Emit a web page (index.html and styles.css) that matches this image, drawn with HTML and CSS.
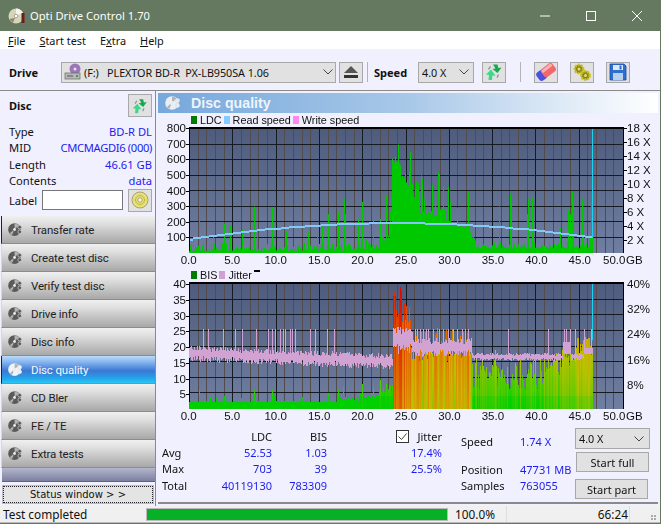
FILE: index.html
```html
<!DOCTYPE html>
<html lang="en">
<head>
<meta charset="utf-8">
<title>Opti Drive Control 1.70</title>
<link rel="stylesheet" href="styles.css">
</head>
<body>
<svg class="sprites" width="0" height="0" aria-hidden="true">
  <symbol id="nav-disc" viewBox="0 0 16 16">
    <circle cx="7" cy="8" r="6.800" fill="currentColor"/>
    <path d="M7 1.500a6.500 6.500 0 0 1 4.500 1.900L8.400 6.600A2 2 0 0 0 7 6zM2 12a6.500 6.500 0 0 0 2.300 1.900L6 10A2 2 0 0 1 5.200 9z" fill="#b4b4b4"/>
    <circle cx="7" cy="8" r="1.500" fill="#ececec"/>
    <circle cx="12.500" cy="5.500" r="2" fill="currentColor" stroke="#dcdcdc" stroke-width=".7"/>
    <circle cx="12.500" cy="10.500" r="2" fill="currentColor" stroke="#dcdcdc" stroke-width=".7"/>
  </symbol>
  <symbol id="swap" viewBox="0 0 20 20">
    <path d="M9 2.500h4.500l.8 3.500 3.200-.5L13.500 11 8.500 7l3-.5z" fill="#16a850"/>
    <path d="M7 7.500L2 12.500l3 .5-.5 5h3.500l.5-4.500 3 .2z" fill="#40d888"/>
    <path d="M4 7l2-3 1 .8-2 3zM15 13l-1.500 3-1-.7 1.500-3z" fill="#8c8c8c"/>
  </symbol>
</svg>
<div class="window">
  <header class="titlebar">
    <svg class="app-icon" width="18" height="18" viewBox="0 0 18 18"><circle cx="8" cy="9" r="7.500" fill="#d8d4b8"/><path d="M8 1.500A7.500 7.500 0 0 1 15 6L9.500 8.200A2 2 0 0 0 8 7z" fill="#f6f4e8"/><path d="M1.500 12A7.500 7.500 0 0 0 5 15.800L7 10.800z" fill="#8d8a70"/><circle cx="8" cy="9" r="1.800" fill="#fff" stroke="#777" stroke-width=".6"/><rect x="13.500" y="6" width="3" height="10" fill="#6a1e1e"/></svg>
    <span class="app-title">Opti Drive Control 1.70</span>
    <div class="win-controls">
      <svg width="46" height="30" viewBox="0 0 46 30"><path d="M18 15h10" stroke="#fff" fill="none"/></svg>
      <svg width="46" height="30" viewBox="0 0 46 30"><rect x="18.500" y="10.500" width="9" height="9" stroke="#fff" fill="none"/></svg>
      <svg width="46" height="30" viewBox="0 0 46 30"><path d="M18 10l10 10M28 10L18 20" stroke="#fff" fill="none"/></svg>
    </div>
  </header>
  <nav class="menubar">
    <span class="menu"><u>F</u>ile</span>
    <span class="menu"><u>S</u>tart test</span>
    <span class="menu">E<u>x</u>tra</span>
    <span class="menu"><u>H</u>elp</span>
  </nav>
  <div class="toolbar">
    <span class="tool-label drive-label">Drive</span>
    <div class="select drive-select">
      <svg width="18" height="18" viewBox="0 0 18 18"><circle cx="11" cy="6" r="5.500" fill="#9a78b8"/><circle cx="11" cy="6" r="1.500" fill="#e8e0f0"/><rect x="1" y="10" width="15" height="6" fill="#b8b8b8" stroke="#666" stroke-width=".7"/><rect x="3" y="12.500" width="6" height="1" fill="#555"/><rect x="12" y="12" width="2" height="2" fill="#20b030"/></svg>
      <span class="select-text">(F:)&nbsp;&nbsp; PLEXTOR BD-R&nbsp; PX-LB950SA 1.06</span>
      <svg class="chev" width="10" height="6" viewBox="0 0 10 6"><path d="M.5.500L5 5 9.500.500" stroke="#444" fill="none"/></svg>
    </div>
    <button class="tool-btn eject-btn" aria-label="Eject"><svg width="16" height="14" viewBox="0 0 16 14"><path d="M8 1l7 7H1z" fill="#555"/><rect x="1" y="10" width="14" height="3" fill="#333"/></svg></button>
    <span class="tool-sep sep-a"></span>
    <span class="tool-label speed-label">Speed</span>
    <div class="select speed-select">
      <span class="select-text">4.0 X</span>
      <svg class="chev" width="10" height="6" viewBox="0 0 10 6"><path d="M.5.500L5 5 9.500.500" stroke="#444" fill="none"/></svg>
    </div>
    <button class="tool-btn swap-btn" aria-label="Refresh"><svg width="20" height="20"><use href="#swap"/></svg></button>
    <span class="tool-sep sep-b"></span>
    <button class="tool-btn erase-btn" aria-label="Erase"><svg width="20" height="20" viewBox="0 0 20 20"><g transform="rotate(-38 10 10)"><rect x="0" y="5" width="9" height="10" rx="3" fill="#4a50e0"/><rect x="6" y="5" width="14" height="10" rx="2.500" fill="#f0686c"/><rect x="7" y="6" width="12" height="3" fill="#f8b0b0"/></g></svg></button>
    <button class="tool-btn gear-btn" aria-label="Settings"><svg width="20" height="20" viewBox="0 0 20 20"><circle cx="7" cy="7" r="4.200" fill="#8a8618" stroke="#c8c020" stroke-width="2.400" stroke-dasharray="2 1"/><circle cx="13.500" cy="13.500" r="4.200" fill="#8a8618" stroke="#c8c020" stroke-width="2.400" stroke-dasharray="2 1"/><circle cx="7" cy="7" r="1.500" fill="#e0dc80"/><circle cx="13.500" cy="13.500" r="1.500" fill="#e0dc80"/></svg></button>
    <button class="tool-btn save-btn" aria-label="Save"><svg width="18" height="18" viewBox="0 0 18 18"><path d="M1 1h14l2 2v14H1z" fill="#2f6fd0" stroke="#1c4c9c" stroke-width=".8"/><rect x="4" y="2" width="10" height="5" fill="#dfe8f6"/><rect x="10.500" y="2.500" width="2" height="4" fill="#2f6fd0"/><rect x="4" y="10" width="10" height="7" fill="#b8d0f0"/></svg></button>
  </div>
  <main class="content">
    <aside class="sidebar">
      <div class="disc-head">
        <span class="disc-title">Disc</span>
        <button class="tool-btn small-btn" aria-label="Refresh disc"><svg width="18" height="18"><use href="#swap"/></svg></button>
      </div>
      <dl class="disc-info">
        <div class="info-row"><dt>Type</dt><dd>BD-R DL</dd></div>
        <div class="info-row"><dt>MID</dt><dd>CMCMAGDI6 (000)</dd></div>
        <div class="info-row"><dt>Length</dt><dd>46.61 GB</dd></div>
        <div class="info-row"><dt>Contents</dt><dd>data</dd></div>
      </dl>
      <div class="label-row">
        <span>Label</span>
        <span class="label-input"></span>
        <button class="tool-btn small-btn" aria-label="Label"><svg width="18" height="18" viewBox="0 0 18 18"><circle cx="9" cy="9" r="8" fill="#e8e070" stroke="#777" stroke-width=".6"/><circle cx="9" cy="9" r="4.500" fill="none" stroke="#c0b840"/><circle cx="9" cy="9" r="2.200" fill="#f6f6e0" stroke="#777" stroke-width=".6"/></svg></button>
      </div>
      <ul class="nav">
        <li class="nav-item first"><svg width="15" height="15"><use href="#nav-disc"/></svg><span>Transfer rate</span></li>
        <li class="nav-item"><svg width="15" height="15"><use href="#nav-disc"/></svg><span>Create test disc</span></li>
        <li class="nav-item"><svg width="15" height="15"><use href="#nav-disc"/></svg><span>Verify test disc</span></li>
        <li class="nav-item"><svg width="15" height="15"><use href="#nav-disc"/></svg><span>Drive info</span></li>
        <li class="nav-item"><svg width="15" height="15"><use href="#nav-disc"/></svg><span>Disc info</span></li>
        <li class="nav-item active"><svg width="15" height="15"><use href="#nav-disc"/></svg><span>Disc quality</span></li>
        <li class="nav-item"><svg width="15" height="15"><use href="#nav-disc"/></svg><span>CD Bler</span></li>
        <li class="nav-item"><svg width="15" height="15"><use href="#nav-disc"/></svg><span>FE / TE</span></li>
        <li class="nav-item"><svg width="15" height="15"><use href="#nav-disc"/></svg><span>Extra tests</span></li>
      </ul>
      <div class="nav-fill"></div>
      <div class="status-btn"><span>Status window &gt; &gt;</span></div>
    </aside>
    <section class="panel">
      <div class="panel-head">
        <svg width="16" height="16" class="head-icon"><use href="#nav-disc"/></svg>
        <h1>Disc quality</h1>
      </div>
      <div class="legend legend-top">
        <i class="sw sw-ldc"></i><span>LDC</span>
        <i class="sw sw-read"></i><span>Read speed</span>
        <i class="sw sw-write"></i><span>Write speed</span>
      </div>
      <div class="chart chart-top">
        <div class="axis axis-left ticks axis-h-top">
          <span>800</span><span>700</span><span>600</span><span>500</span><span>400</span><span>300</span><span>200</span><span>100</span><span></span>
        </div>
        <canvas id="plot-ldc" class="plot" width="435" height="126"></canvas>
        <div class="axis axis-right ticks axis-h-top">
          <span>18 X</span><span>16 X</span><span>14 X</span><span>12 X</span><span>10 X</span><span>8 X</span><span>6 X</span><span>4 X</span><span>2 X</span><span></span>
        </div>
      </div>
      <div class="xaxis">
        <span>0.0</span><span>5.0</span><span>10.0</span><span>15.0</span><span>20.0</span><span>25.0</span><span>30.0</span><span>35.0</span><span>40.0</span><span>45.0</span><span class="x-last">50.0</span>
        <b>GB</b>
      </div>
      <div class="legend legend-bottom">
        <i class="sw sw-ldc"></i><span>BIS</span>
        <i class="sw sw-jit"></i><span>Jitter</span>
        <i class="legend-mark"></i>
      </div>
      <div class="chart chart-bottom">
        <div class="axis axis-left ticks axis-h-bottom">
          <span>40</span><span>35</span><span>30</span><span>25</span><span>20</span><span>15</span><span>10</span><span>5</span><span></span>
        </div>
        <canvas id="plot-bis" class="plot" width="435" height="127"></canvas>
        <div class="axis axis-right axis-h-bottom">
          <span>40%</span><span>32%</span><span>24%</span><span>16%</span><span>8%</span><span></span>
        </div>
      </div>
      <div class="xaxis">
        <span>0.0</span><span>5.0</span><span>10.0</span><span>15.0</span><span>20.0</span><span>25.0</span><span>30.0</span><span>35.0</span><span>40.0</span><span>45.0</span><span class="x-last">50.0</span>
        <b>GB</b>
      </div>
      <div class="stats">
        <div class="stat-table">
          <span></span><span class="th">LDC</span><span class="th">BIS</span>
          <span>Avg</span><span class="val">52.53</span><span class="val">1.03</span>
          <span>Max</span><span class="val">703</span><span class="val">39</span>
          <span>Total</span><span class="val">40119130</span><span class="val">783309</span>
        </div>
        <div class="jitter">
          <div class="jit-head">
            <svg class="check" width="13" height="13" viewBox="0 0 13 13"><rect x=".5" y=".5" width="12" height="12" fill="#fff" stroke="#333"/><path d="M2.500 6.500l3 3 5-6" stroke="#444" fill="none"/></svg>
            <span>Jitter</span>
          </div>
          <span class="val">17.4%</span>
          <span class="val">25.5%</span>
        </div>
        <div class="pos-info">
          <span class="pos-a">Speed</span><span class="blue pos-a">1.74 X</span>
          <span class="pos-b">Position</span><span class="blue pos-b">47731 MB</span>
          <span class="pos-c">Samples</span><span class="blue pos-c">763055</span>
        </div>
        <div class="controls">
          <div class="select ctl-select">
            <span class="select-text">4.0 X</span>
            <svg class="chev" width="10" height="6" viewBox="0 0 10 6"><path d="M.5.500L5 5 9.500.500" stroke="#444" fill="none"/></svg>
          </div>
          <button class="ctl-btn full-btn">Start full</button>
          <button class="ctl-btn part-btn">Start part</button>
        </div>
      </div>
    </section>
  </main>
  <footer class="statusbar">
    <span class="st-msg">Test completed</span>
    <span class="st-progress"><i></i></span>
    <span class="st-pct">100.0%</span>
    <span class="st-time">66:24</span>
    <span class="st-grip"></span>
  </footer>
</div>
<script src="chart.js"></script>
</body>
</html>
```
FILE: styles.css
```css
* { box-sizing: border-box; }
html, body { margin: 0; padding: 0; }
body {
  width: 661px;
  height: 524px;
  overflow: hidden;
  background: #f0f0fe;
  font: 11.500px "Noto Sans", "Liberation Sans", sans-serif;
  color: #111;
}
.sprites { position: absolute; }
.window {
  width: 661px;
  height: 524px;
  display: flex;
  flex-direction: column;
  border-right: 1px solid #64795f;
  border-bottom: 1px solid #64795f;
  background: #f0f0fe;
}
.titlebar {
  height: 31px;
  flex: none;
  background: #64795f;
  display: flex;
  align-items: center;
  padding-left: 8px;
  color: #fff;
}
.app-icon { flex: none; }
.app-title { margin-left: 4px; font-size: 11.200px; }
.win-controls { margin-left: auto; display: flex; }
.menubar {
  height: 18px;
  flex: none;
  background: #fff;
  display: flex;
  align-items: center;
  padding-left: 8px;
  gap: 14px;
  font-size: 10.900px;
}
.toolbar {
  height: 42px;
  flex: none;
  display: flex;
  align-items: center;
  padding: 5px 0 0 9px;
  border-bottom: 1px solid #8a8a8a;
}
.tool-label { font-weight: 700; font-size: 11px; }
.drive-label { width: 52px; }
.select {
  display: flex;
  align-items: center;
  height: 21px;
  background: #e1e1e1;
  border: 1px solid #a8a8a8;
  color: #111;
  font-size: 10.800px;
}
.select-text { white-space: pre; }
.chev { margin-left: auto; flex: none; }
.drive-select { width: 275px; padding: 0 2px; }
.drive-select .select-text { margin-left: 2px; letter-spacing: -.05px; }
.speed-select { width: 56px; margin-right: 8px; padding: 0 4px 0 3px; }
.tool-btn {
  display: flex;
  align-items: center;
  justify-content: center;
  width: 24px;
  height: 21px;
  padding: 0;
  background: #e1e1e1;
  border: 1px solid #a8a8a8;
}
.eject-btn { margin-left: 3px; }
.tool-sep { width: 1px; height: 20px; background: #b4b4b4; }
.sep-a { margin-left: 4px; }
.speed-label { margin-left: 6px; width: 44px; }
.sep-b { margin-left: 14px; }
.erase-btn { margin-left: 13px; }
.gear-btn { margin-left: 12px; }
.save-btn { margin-left: 12px; }
.content { flex: 1; min-height: 0; display: flex; }
.sidebar {
  width: 156px;
  flex: none;
  display: flex;
  flex-direction: column;
  border-right: 1px solid #8a8a8a;
}
.disc-head {
  height: 29px;
  flex: none;
  display: flex;
  align-items: center;
  justify-content: space-between;
  padding: 0 3px 0 9px;
}
.disc-title { font-weight: 700; font-size: 11px; }
.small-btn { width: 24px; height: 23px; }
.disc-info { margin: 3px 0 0; padding: 0 3px 0 9px; }
.info-row { display: flex; justify-content: space-between; height: 16.500px; align-items: center; font-size: 11.200px; }
.info-row dd { margin: 0; color: #1c1cf0; }
.info-row:nth-child(2) dd { letter-spacing: -.35px; }
.label-row {
  display: flex;
  align-items: center;
  padding: 0 3px 0 9px;
  height: 24px;
  margin-top: -1px;
  font-size: 11.200px;
}
.label-input {
  width: 81px;
  height: 20px;
  margin-left: auto;
  margin-right: 5px;
  background: #fff;
  border: 1px solid #777;
}
.nav { list-style: none; margin: 4px 0 0; padding: 0 0 0 1px; }
.nav-item {
  height: 28px;
  display: flex;
  align-items: center;
  padding-left: 6px;
  gap: 8px;
  font: 11.500px "Roboto", "Noto Sans", sans-serif;
  letter-spacing: -.15px;
  background: linear-gradient(#f0f0f0 0, #dedede 30%, #c6c6c6 60%, #a8a8a8 100%);
  border-bottom: 1px solid #8c8c8c;
  border-left: 1px solid #d8d8d8;
  color: #222;
}
.nav-item svg { color: #5a5a5a; flex: none; }
.nav-item.first { border-left: 1px solid #222; }
.nav-item.active {
  background: linear-gradient(#b8dcfa 0, #80b0ee 25%, #3a78d4 55%, #24a8ec 85%, #28c8f4 100%);
  color: #f4f8ff;
  border-left: 1px solid #222;
}
.nav-item.active svg { color: #f0f4fa; }
.nav-fill {
  height: 14px;
  flex: none;
  margin-left: 2px;
  background: linear-gradient(#b4b6cc, #7c80a0);
  border-bottom: 1px solid #666;
}
.status-btn {
  flex: none;
  height: 17px;
  margin: 4px 2px 0 3px;
  background: #e4e4e4;
  outline: 1px solid #bbb;
  border: 1px dotted #222;
  display: flex;
  align-items: center;
  justify-content: center;
  font: 10px "DejaVu Sans", sans-serif;
}
.panel {
  flex: 1;
  min-width: 0;
  margin: 2px;
  display: flex;
  flex-direction: column;
  position: relative;
  border-bottom: 2px solid #8a8a8a;
}
.panel-head {
  height: 20px;
  flex: none;
  display: flex;
  align-items: center;
  padding-left: 7px;
  background: linear-gradient(90deg, #76a8dc, #a8c8e8 50%, #fff 100%);
}
.head-icon { color: #e8eef8; }
.panel-head h1 {
  margin: 0 0 0 10px;
  font: 700 14.200px "Liberation Sans", sans-serif;
  color: #eef4fc;
}
.legend {
  height: 14px;
  flex: none;
  display: flex;
  align-items: center;
  padding-left: 33px;
  font: 10.800px "Liberation Sans", sans-serif;
  position: relative;
}
.legend span { margin-right: 2px; }
.sw { width: 6px; height: 8px; margin-right: 3px; }
.sw-ldc { background: #007c00; }
.sw-read { background: #84ccff; }
.sw-write { background: #ff88f0; }
.sw-jit { background: #d0a0d0; }
.legend-mark {
  position: absolute;
  left: 96px;
  top: 2px;
  width: 6px;
  height: 2px;
  background: #000;
}
.chart { display: flex; flex: none; align-items: flex-start; font: 11.500px "Liberation Sans", sans-serif; }
.chart-top { height: 126px; }
.chart-bottom { height: 127px; }
.plot { display: block; flex: none; width: 435px; }
.axis {
  display: flex;
  flex-direction: column;
  justify-content: space-between;
  margin-top: -6px;
}
.axis-h-top { height: 139px; }
.axis-h-bottom { height: 140px; margin-top: -5px; }
.axis span { height: 14px; line-height: 14px; white-space: nowrap; position: relative; }
.axis-left { width: 31px; text-align: right; padding-right: 3px; }
.axis-right { padding-left: 3px; }
.axis-left.ticks span:not(:empty)::after {
  content: "";
  position: absolute;
  right: -3px;
  top: 7px;
  width: 3px;
  height: 1px;
  background: #000;
}
.axis-right.ticks span:not(:empty)::before {
  content: "";
  position: absolute;
  left: -3px;
  top: 7px;
  width: 3px;
  height: 1px;
  background: #000;
}
.xaxis {
  flex: none;
  width: 478px;
  height: 15px;
  margin-left: 9px;
  display: flex;
  justify-content: space-between;
  font: 11.500px/15px "Liberation Sans", sans-serif;
  position: relative;
}
.xaxis span { width: 44px; text-align: center; }
.xaxis .x-last { transform: translateX(-9px); }
.xaxis b { position: absolute; left: 459px; font-weight: 400; }
.stats {
  flex: 1;
  display: flex;
  font-size: 11px;
  padding-top: 4px;
}
.val, .blue { color: #1c1cf0; }
.stat-table {
  display: grid;
  grid-template-columns: 40px 70px 55px;
  grid-auto-rows: 16.300px;
  margin-left: 4px;
  width: 165px;
  align-items: center;
  align-self: flex-start;
}
.th, .stat-table .val { text-align: right; }
.jitter {
  margin-left: 69px;
  width: 46px;
  display: grid;
  grid-auto-rows: 16.300px;
  align-items: center;
  align-self: flex-start;
  text-align: right;
}
.jit-head { display: flex; justify-content: space-between; align-items: center; }
.pos-info {
  margin: 5px 0 0 19px;
  width: 114px;
  display: grid;
  grid-template-columns: 59px 1fr;
  grid-template-rows: 16px 12px 16px 16px;
  align-items: center;
  align-self: flex-start;
  white-space: nowrap;
}
.pos-a { grid-row: 1; }
.pos-b { grid-row: 3; }
.pos-c { grid-row: 4; }
.controls {
  display: flex;
  flex-direction: column;
}
.ctl-select { width: 75px; height: 21px; padding: 0 5px 0 3px; flex: none; }
.ctl-btn {
  height: 20px;
  width: 73px;
  flex: none;
  margin-left: 1px;
  padding: 0;
  background: #e1e1e1;
  border: 1px solid #a8a8a8;
  font: 11px "Noto Sans", sans-serif;
  color: #111;
}
.full-btn { margin-top: 3px; }
.part-btn { margin-top: 7px; margin-left: 0; }
.statusbar {
  height: 17px;
  flex: none;
  display: flex;
  align-items: center;
  font-size: 11.800px;
  background: #f0f0f0;
  border-bottom: 1px solid #bbb;
  padding-left: 3px;
}
.st-msg { width: 143px; }
.st-progress { width: 302px; height: 13px; background: #e6e6e6; border: 1px solid #bbb; display: block; }
.st-progress i { display: block; width: 100%; height: 100%; background: #08b028; }
.st-pct { margin-left: 7px; width: 52px; border-right: 1px solid #ddd; height: 100%; line-height: 17px; }
.st-time { width: 123px; padding-right: 1px; text-align: right; border-right: 1px solid #ddd; height: 100%; line-height: 17px; }
.st-grip {
  width: 6px;
  height: 6px;
  margin-left: auto;
  margin-right: 3px;
  margin-top: 8px;
  background: radial-gradient(circle at 1px 1px, #aaa 1px, transparent 1px) 0 0 / 3px 3px;
}
```
FILE: chart.js
```js
(function () {
  var seed = 12345;
  function r() {
    seed = (seed * 16807) % 2147483647;
    return seed / 2147483647;
  }
  var X0 = 189, END = 403, STEP = 8.66;

  function zl(z) { return 160 + z / 3 - X0; }
  function zr(z) { return 400 + z / 3 - X0; }

  function backdrop(ctx, w, h, rows) {
    var g = ctx.createLinearGradient(0, 0, 0, h);
    g.addColorStop(0, "#4e5b7c");
    g.addColorStop(1, "#707fa1");
    ctx.fillStyle = g;
    ctx.fillRect(0, 0, w, h);
    for (var i = 1; i < 50; i++) {
      if (i % 5 === 0) continue;
      ctx.fillStyle = "#544b4c";
      ctx.fillRect(Math.round(i * STEP), 0, 1, h);
    }
    ctx.fillStyle = "#161a22";
    for (var j = 5; j < 50; j += 5) ctx.fillRect(Math.round(j * STEP), 0, 1, h);
    for (var k = 1; k < rows; k++) ctx.fillRect(0, Math.round(2 + k * (h - 2) / rows) - 1, w, 1);
    ctx.fillStyle = "#000";
    ctx.fillRect(0, 0, w, 2);
    ctx.fillRect(0, 0, 1, h);
    ctx.fillRect(w - 1, 0, 1, h);
  }

  function drawTop() {
    var c = document.getElementById("plot-ldc"), ctx = c.getContext("2d");
    var w = c.width, h = c.height;
    backdrop(ctx, w, h, 8);
    var vals = [], x;
    var scale = (h - 2) / 800;
    for (x = 0; x <= END; x++) {
      var n = r(), v;
      if (x < 160) v = 14 + n * n * 55;
      else if (x < 190) v = 25 + n * n * 70;
      else if (x < 202) v = 55 + n * 60;
      else if (x < 203) v = 130;
      else if (x < 204) v = 300;
      else if (x < 212) v = 560 + n * 40;
      else if (x < 218) v = 440 + n * 80;
      else if (x < 231) v = 360 + n * 110;
      else if (x < 240) v = 240 + n * 50;
      else if (x < 256) v = 230 + n * 60;
      else if (x < 280) v = 140 + (280 - x) * 2.4 + n * 30;
      else if (x < 287) v = 60 + (287 - x) * 10 + n * 20;
      else if (x < 400) v = 30 + n * n * 40;
      else v = 80 + n * 40;
      vals[x] = v;
    }
    [[118,300],[100,120],[160,130],[193,190],[210,180],[247,150],[283,300],[290,170],[335,295],
     [375,190],[378,140],[445,140],[470,150],[485,170],[503,250],[535,270],[538,200],[552,350],[555,250],[595,220],[605,330],
     [640,250],[660,220],[677,370],[690,270],[713,700],[705,620],[695,610]].forEach(function (p) {
      vals[Math.round(zl(p[0]))] = p[1];
    });
    [[29,650],[26,520],[22,470],[10,480],[62,500],[66,480],[72,350],[97,440],[105,380],[115,520],[118,510],[130,430],[143,430],[150,330],
     [172,290],[205,390],[298,300],[330,380],[332,350],[380,250],[384,350],[397,360],[400,260],
     [505,280],[515,400],[510,250],[518,340],[545,350],[550,200],[572,320],[575,120],[480,160]].forEach(function (p) {
      vals[Math.round(zr(p[0]))] = p[1];
    });
    ctx.fillStyle = "#00c800";
    for (x = 0; x <= END; x++) {
      var t = Math.min(vals[x] * scale, h - 2);
      ctx.fillRect(x, h - t, 1, t);
    }
    ctx.fillStyle = "#84c8f8";
    for (x = 1; x <= END; x++) {
      var sx = Math.floor((x + X0 - 393) / 8) * 8;
      var sp = 192 - sx * sx * 0.00245;
      ctx.fillRect(x, Math.round(h - sp * scale) - 1, 1, 2);
    }
    ctx.fillStyle = "#20d0f0";
    ctx.fillRect(END, 2, 1, h - 2 - 100 * scale);
  }

  var RAMP = [[0,[0,208,0]],[9,[110,200,0]],[15,[190,192,0]],[21,[216,150,0]],[29,[224,84,0]],[38,[224,8,0]]];
  function ramp(t) {
    for (var i = 1; i < RAMP.length; i++) {
      if (t <= RAMP[i][0]) {
        var a = RAMP[i - 1], b = RAMP[i], f = (t - a[0]) / (b[0] - a[0]);
        return "rgb(" + [0, 1, 2].map(function (k) { return Math.round(a[1][k] + (b[1][k] - a[1][k]) * f); }).join(",") + ")";
      }
    }
    return "rgb(224,8,0)";
  }

  function drawBottom() {
    var c = document.getElementById("plot-bis"), ctx = c.getContext("2d");
    var w = c.width, h = c.height;
    backdrop(ctx, w, h, 8);
    var sc = (h - 2) / 40, x, bis = [], jl = [], jh = [];
    for (x = 0; x <= END; x++) {
      var n = r(), b;
      if (x < 200) b = n < 0.12 ? 3 + r() * 1.5 : 2 + r() * 0.4;
      else if (x < 204) b = 4 + n * 4;
      else if (x < 207) b = 34 + n * 5;
      else if (x < 216) b = 27 + n * 12;
      else if (x < 222) b = 26 + n * 7;
      else if (x < 283) b = 15 + n * 11;
      else if (x < 355) b = 6 + n * 10 + (r() < 0.15 ? 3 : 0);
      else if (x < 372) b = 9 + n * 9;
      else if (x < 385) b = 13 + n * 6;
      else b = 17 + n * 6;
      if (x > 150 && x < 170) b = 2.5 + n * 1.5;
      if (x >= 170 && x < 190) b = 3 + n * 2;
      if (x >= 190 && x < 200) b = 5 + n * 1.5;
      bis[x] = b;
    }
    [[118,6],[100,3],[193,4],[283,6],[335,6],[375,4],[505,5],[535,6],[550,7],[605,8],[640,7],[660,9],[677,8]].forEach(function (p) {
      bis[Math.round(zl(p[0]))] = p[1];
    });
    for (x = 0; x <= END; x++) {
      var bh = bis[x];
      var warm = x >= 204 && x < 283;
      var cv = r() * 8 - 2;
      for (var v = 0; v < bh * sc; v++) {
        var val = v / sc, t;
        t = warm ? 0.55 * bh + 0.25 * val + cv + 4 : 0.3 * val + 0.62 * bh - 3 + (val < 4 ? -2 : 0) + cv * 0.3;
        ctx.fillStyle = ramp(Math.max(0, t));
        ctx.fillRect(x, h - 1 - v, 1, 1);
      }
    }
    for (x = 0; x <= END; x++) {
      var a = r(), cen;
      if (x < 204) cen = 18 - x * 0.0125;
      else if (x < 224) cen = 22.5;
      else if (x < 283) cen = 20;
      else cen = 16.8;
      var sp = x < 204 ? 1.9 : x < 224 ? 3.3 : x < 283 ? 2.3 : 0.9;
      jl[x] = cen - sp * (0.5 + a);
      jh[x] = cen + sp * (0.3 + r() * 0.9);
    }
    function spike(px) { px = Math.round(px); jh[px] = 25.5; }
    [128,145,188,225,245,288,325,335,345,360,370,375,390,395,405,450,465,500,522].forEach(function (z) { spike(zl(z)); });
    [5,15,30,45,50,60,70,78,85,100,118,130,145,160,172,185,195,205,325,445,492,498,510,525,552,572].forEach(function (z) { spike(zr(z)); });
    for (x = Math.round(zr(490)); x < Math.round(zr(512)); x++) { jl[x] = 17.5; jh[x] = Math.max(jh[x], 21.5); }
    for (x = Math.round(zr(552)); x <= END; x++) { jl[x] = 17.5; jh[x] = Math.max(jh[x], 19.5); }
    ctx.fillStyle = "#d2a2d2";
    for (x = 0; x <= END; x++) {
      var top = h - Math.round(jh[x] * sc), bot = h - Math.round(jl[x] * sc);
      ctx.fillRect(x, top, 1, bot - top);
    }
    ctx.fillStyle = "#20d0f0";
    ctx.fillRect(END, 2, 1, h - 2 - 22 * sc);
  }

  drawTop();
  drawBottom();
})();
```
